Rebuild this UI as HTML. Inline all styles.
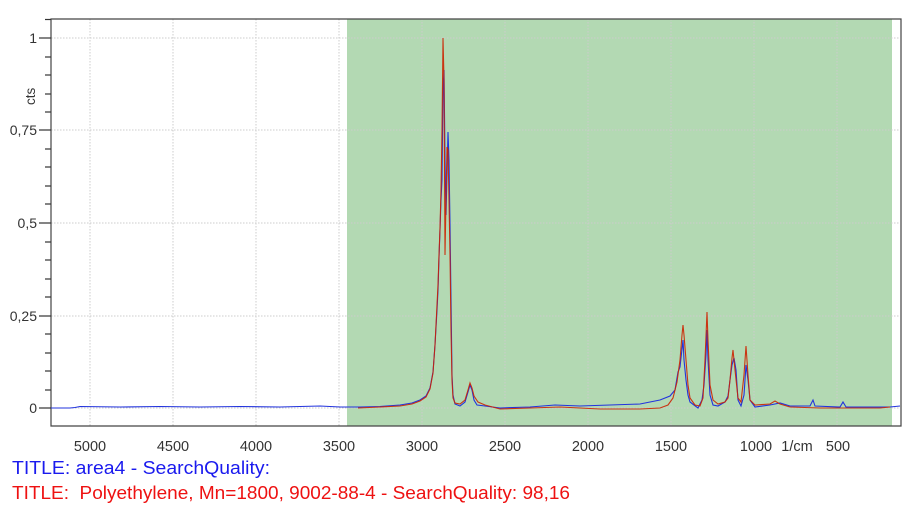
<!DOCTYPE html>
<html><head><meta charset="utf-8"><style>
html,body{margin:0;padding:0;background:#fff;width:914px;height:528px;overflow:hidden}
svg{display:block}
text{font-family:"Liberation Sans",sans-serif;fill:#333}
</style></head><body>
<svg width="914" height="528" viewBox="0 0 914 528">
<rect x="347" y="19" width="545" height="407" fill="#b3d9b3"/>
<g stroke="#ccc" stroke-width="1" stroke-dasharray="1.5,1.5" fill="none">
<line x1="90" y1="19" x2="90" y2="426"/><line x1="173" y1="19" x2="173" y2="426"/>
<line x1="256" y1="19" x2="256" y2="426"/><line x1="339" y1="19" x2="339" y2="426"/>
<line x1="422" y1="19" x2="422" y2="426"/><line x1="505" y1="19" x2="505" y2="426"/>
<line x1="588" y1="19" x2="588" y2="426"/><line x1="671" y1="19" x2="671" y2="426"/>
<line x1="754" y1="19" x2="754" y2="426"/><line x1="837" y1="19" x2="837" y2="426"/>
<line x1="51" y1="38" x2="900" y2="38"/><line x1="51" y1="130" x2="900" y2="130"/>
<line x1="51" y1="223" x2="900" y2="223"/><line x1="51" y1="316" x2="900" y2="316"/>
<line x1="51" y1="408" x2="900" y2="408"/>
</g>
<path d="M51 19 H901 V426 H51 Z" fill="none" stroke="#444" stroke-width="1.2"/>
<g stroke="#333" stroke-width="1.2">
<line x1="39" y1="38" x2="51" y2="38"/><line x1="39" y1="130" x2="51" y2="130"/>
<line x1="39" y1="223" x2="51" y2="223"/><line x1="39" y1="316" x2="51" y2="316"/>
<line x1="39" y1="408" x2="51" y2="408"/>
<line x1="45" y1="19.5" x2="51" y2="19.5"/>
<line x1="45" y1="57" x2="51" y2="57"/><line x1="45" y1="75" x2="51" y2="75"/><line x1="45" y1="94" x2="51" y2="94"/><line x1="45" y1="112" x2="51" y2="112"/>
<line x1="45" y1="149" x2="51" y2="149"/><line x1="45" y1="167" x2="51" y2="167"/><line x1="45" y1="186" x2="51" y2="186"/><line x1="45" y1="204" x2="51" y2="204"/>
<line x1="45" y1="242" x2="51" y2="242"/><line x1="45" y1="260" x2="51" y2="260"/><line x1="45" y1="279" x2="51" y2="279"/><line x1="45" y1="297" x2="51" y2="297"/>
<line x1="45" y1="334" x2="51" y2="334"/><line x1="45" y1="353" x2="51" y2="353"/><line x1="45" y1="371" x2="51" y2="371"/><line x1="45" y1="390" x2="51" y2="390"/>
</g>
<g font-size="14" text-anchor="end">
<text x="37" y="43">1</text><text x="37" y="135">0,75</text><text x="37" y="228">0,5</text>
<text x="37" y="321">0,25</text><text x="37" y="413">0</text>
</g>
<text x="0" y="0" font-size="13.5" transform="translate(35,105) rotate(-90)">cts</text>
<g id="xt" stroke="#333" stroke-width="1.2"></g>
<g font-size="14.5" text-anchor="middle">
<text x="90" y="451">5000</text><text x="173" y="451">4500</text><text x="256" y="451">4000</text>
<text x="339" y="451">3500</text><text x="422" y="451">3000</text><text x="505" y="451">2500</text>
<text x="588" y="451">2000</text><text x="671" y="451">1500</text><text x="756" y="451">1000</text>
<text x="797" y="451">1/cm</text><text x="838" y="451">500</text>
</g>
<path fill="none" stroke="#2233dd" stroke-width="1.1" d="M51 408 L70 408 L75 407.5 L80 406.5 L120 407 L160 406.5 L200 407 L240 406.5 L280 407 L300 406.5 L320 406 L340 407 L360 407 L380 406.5 L400 405 L412 403 L420 400 L426 396 L430 388 L433 372 L435 345 L437 310 L438 290 L439 258 L440 230 L441 200 L442 180 L443 90 L444 70 L445 160 L446 215 L447 175 L448 132 L449 160 L450 225 L451 300 L452 375 L453 395 L455 404 L460 406 L465 402 L468 392 L470 385 L472 390 L474 400 L477 405 L485 406 L500 408 L530 407 L555 405 L580 406 L610 405 L640 404 L660 400 L670 396 L675 390 L678 372 L680 367 L681 358 L683 340 L684 360 L686 380 L688 395 L690 402 L694 405 L698 408 L702 400 L704 385 L706 355 L707 330 L708 360 L710 395 L713 405 L718 406 L725 402 L728 396 L730 380 L732 365 L734 358 L736 370 L738 400 L741 406 L744 395 L746 365 L748 380 L750 400 L755 407 L770 405 L780 403 L790 406 L810 406 L813 400 L815 406 L840 407 L843 402 L846 407 L870 407 L890 407 L900 406"/>
<path fill="none" stroke="#cc2200" stroke-width="1.1" opacity="0.9" d="M358 408 L380 407 L400 406 L412 404 L420 401 L426 397 L430 389 L433 373 L435 345 L437 305 L438 285 L439 255 L440 228 L441 190 L442 130 L443 38 L444 80 L445 255 L446 200 L447 147 L448 150 L449 200 L450 255 L451 330 L452 380 L453 398 L455 403 L460 404 L465 400 L468 390 L470 383 L472 388 L474 396 L478 402 L485 405 L500 409 L530 408 L560 407 L600 409 L640 409 L660 408 L668 405 L673 398 L677 382 L680 360 L682 335 L683 325 L684 335 L686 360 L688 385 L690 398 L695 405 L700 406 L703 398 L705 360 L707 312 L708 340 L710 385 L713 400 L718 404 L725 402 L728 398 L730 380 L732 358 L733 350 L735 370 L738 398 L741 402 L744 375 L746 346 L748 375 L750 400 L755 405 L770 404 L775 401 L780 404 L790 407 L820 408 L850 408 L880 408 L890 407"/>
<g font-size="18">
<text x="12" y="474" textLength="258" lengthAdjust="spacingAndGlyphs" style="fill:#1a1aee">TITLE: area4 - SearchQuality:</text>
<text x="12" y="499" textLength="558" lengthAdjust="spacingAndGlyphs" style="fill:#ee1111">TITLE:&#160; Polyethylene, Mn=1800, 9002-88-4 - SearchQuality: 98,16</text>
</g>
<script>
var g=document.getElementById('xt'),s='';
for(var v=5200;v>=100;v-=100){var x=422+(3000-v)*0.166;if(x<52||x>900)continue;var L=(v%500==0)?438:433;s+='<line x1="'+x+'" y1="426" x2="'+x+'" y2="'+L+'"/>';}
g.innerHTML=s;
</script>
</svg>
</body></html>
